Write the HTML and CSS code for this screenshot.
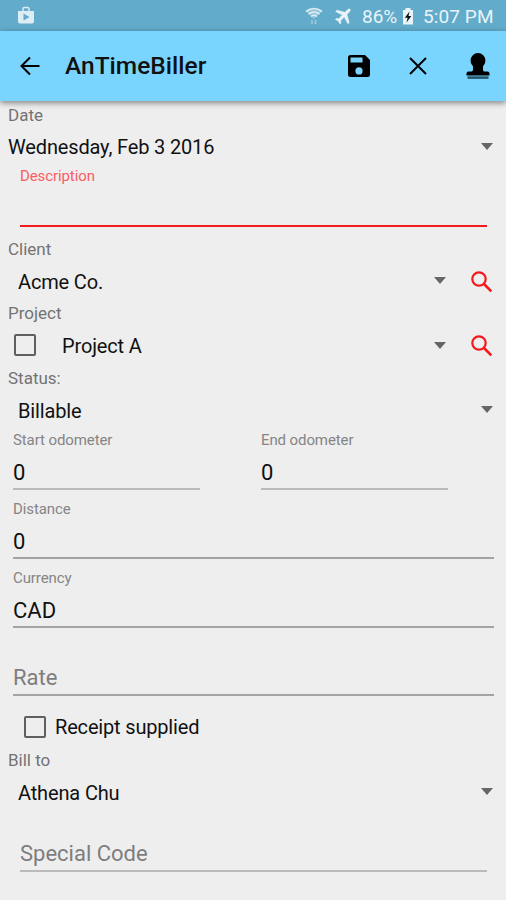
FILE: index.html
```html
<!DOCTYPE html>
<html lang="en">
<head>
<meta charset="utf-8">
<title>AnTimeBiller</title>
<link rel="stylesheet" href="styles.css">
</head>
<body>
<div class="status-bar">
  <svg class="bag" width="18" height="19" viewBox="0 0 18 19"><path d="M6 5V3q0-1.500 1.500-1.500h3Q12 1.500 12 3v2" fill="none" stroke="#dcedf5" stroke-width="1.500"/><path d="M1 5h16v10.500q0 2-2 2H3q-2 0-2-2z" fill="#dcedf5"/><path d="M6.500 7.500v7l6-3.500z" fill="#62abca"/></svg>
  <div class="status-right">
    <svg class="wifi" width="18" height="19" viewBox="0 0 18 19"><g fill="none" stroke="#dcedf5" stroke-width="1.600"><path d="M1 4.500q8-6 16 0M3.500 7q5.500-4 11 0M6 9.500q3-2.500 6 0"/><path d="M7 13v4M10.500 13v4" stroke-opacity=".5"/></g><path d="M1 4.500q8-6 16 0L9 12z" fill="#dcedf5" fill-opacity=".4"/></svg>
    <svg class="plane" width="16" height="17" viewBox="0 0 16 17"><path d="M15 1.200q-1-.8-2.200.3L10 4.300 1.800 2.200.6 3.500l6.700 3.600-3.500 3.600-2.500-.3-1 1 3 1.700 1.700 3 1-1-.3-2.500 3.600-3.500 3.600 6.700 1.300-1.200L12 6.400l2.800-2.900q1.100-1.300.2-2.300z" fill="#e8f4f9" stroke="#e8f4f9" stroke-width=".5"/></svg>
    <span class="percent">86%</span>
    <svg class="battery" width="12" height="17" viewBox="0 0 12 17"><path d="M3.500 0h5v2H11v14.500H1V2h2.500z" fill="#e8f4f9"/><path d="M7.500 3.500 2.800 9.800h2.800l-1 4.700 4.700-6.500H6.500z" fill="#111"/></svg>
    <span class="clock">5:07 PM</span>
  </div>
</div>
<header class="app-bar">
  <svg class="back" width="22" height="20" viewBox="0 0 22 20"><path d="M20.500 10H3M11 1.500 2.500 10l8.500 8.500" fill="none" stroke="#000" stroke-width="2"/></svg>
  <h1 class="title">AnTimeBiller</h1>
  <svg class="save" width="22" height="22" viewBox="0 0 22 22"><path fill="#000" fill-rule="evenodd" d="M2.500 0H17l5 5v14.500q0 2.500-2.500 2.500h-17Q0 22 0 19.500v-17Q0 0 2.500 0zM2.500 2.500v5h12v-5zM11 12.300a3.600 3.600 0 1 0 0 7.200 3.600 3.600 0 0 0 0-7.200z"/></svg>
  <svg class="close" width="18" height="18" viewBox="0 0 18 18"><path d="m1 1 16 16M17 1 1 17" stroke="#000" stroke-width="2"/></svg>
  <svg class="stamp" width="24" height="27" viewBox="0 0 24 27"><path d="M12 0a7.400 7.400 0 0 1 7.400 7.400c0 2.800-1.400 4.600-2.400 5.800v3.300c0 1.500.8 2 2 2h2.500q2 0 2 2v2H.5v-2q0-2 2-2H5c1.200 0 2-.5 2-2v-3.300c-1-1.200-2.400-3-2.400-5.800A7.400 7.400 0 0 1 12 0z" fill="#000"/><path d="M1.500 24.600h21" stroke="#28566b" stroke-width="2.600"/></svg>
</header>
<main class="form">
  <div class="label date-label">Date</div>
  <div class="select date"><span>Wednesday, Feb 3 2016</span><i class="caret"></i></div>
  <div class="field description"><div class="hint">Description</div><div class="value"></div></div>
  <div class="label">Client</div>
  <div class="select searchable"><span class="acme">Acme Co.</span><i class="caret"></i><svg class="search" width="22" height="22" viewBox="0 0 22 22"><g fill="none" stroke="#f5181c"><circle cx="8" cy="8" r="6.700" stroke-width="2.200"/><path d="m13 13 7.300 7.300" stroke-width="2.600"/></g></svg></div>
  <div class="label">Project</div>
  <div class="select searchable project"><i class="checkbox"></i><span>Project A</span><i class="caret"></i><svg class="search" width="22" height="22" viewBox="0 0 22 22"><g fill="none" stroke="#f5181c"><circle cx="8" cy="8" r="6.700" stroke-width="2.200"/><path d="m13 13 7.300 7.300" stroke-width="2.600"/></g></svg></div>
  <div class="label">Status:</div>
  <div class="select"><span>Billable</span><i class="caret"></i></div>
  <div class="odometers">
    <div class="field light"><div class="hint">Start odometer</div><div class="value">0</div></div>
    <div class="field light"><div class="hint">End odometer</div><div class="value">0</div></div>
  </div>
  <div class="field distance"><div class="hint">Distance</div><div class="value">0</div></div>
  <div class="field currency"><div class="hint">Currency</div><div class="value">CAD</div></div>
  <div class="field rate"><div class="value empty">Rate</div></div>
  <div class="receipt"><i class="checkbox"></i><span>Receipt supplied</span></div>
  <div class="label">Bill to</div>
  <div class="select"><span>Athena Chu</span><i class="caret"></i></div>
  <div class="field special light"><div class="value empty">Special Code</div></div>
</main>
</body>
</html>
```
FILE: styles.css
```css
* { box-sizing: border-box; }
body {
  margin: 0;
  height: 900px;
  overflow: hidden;
  background: #eee;
  color: #111;
  font-family: Roboto, sans-serif;
}
svg { display: block; flex: none; }

.status-bar {
  height: 31px;
  padding: 0 12px 0 17px;
  display: flex;
  align-items: center;
  justify-content: space-between;
  background: #62abca;
  color: #e8f4f9;
  font-size: 19px;
}
.status-right { display: flex; align-items: center; line-height: 31px; padding-top: 1px; }
.wifi { margin-right: 1px; }
.plane { margin-left: 11px; }
.percent { margin-left: 11px; width: 36px; white-space: nowrap; }
.battery { margin-left: 4px; }
.clock { margin-left: 9px; width: 71px; white-space: nowrap; letter-spacing: 0.1px; }

.app-bar {
  position: relative;
  height: 70px;
  display: flex;
  align-items: center;
  padding: 0 16px 0 19px;
  background: #79d5fe;
  box-shadow: 0 2px 6px rgba(0, 0, 0, .45);
}
.title {
  margin: 0 auto 0 24px;
  font-size: 24.5px;
  font-weight: 500;
  line-height: 72px;
}
.close { margin-left: 39px; }
.stamp { margin-left: 39px; }

.form { display: flex; flex-direction: column; padding-top: 4px; }
.label {
  height: 21px;
  line-height: 21px;
  padding-left: 8px;
  font-size: 17px;
  color: #737373;
}
.select {
  height: 43px;
  padding: 0 13px 0 18px;
  display: flex;
  align-items: center;
  font-size: 20px;
  letter-spacing: -0.15px;
}
.select.date { padding-left: 8px; height: 42px; }
.caret {
  margin: 0 0 2px auto;
  border: 6px solid transparent;
  border-top: 7px solid #666;
  border-bottom: 0;
}
.search { margin-left: 25px; }
.project { height: 44px; padding-left: 14px; }
.project span { margin-left: 26px; }
.project .checkbox { margin-bottom: 2px; }
.checkbox {
  width: 22px;
  height: 22px;
  border: 2px solid #5f5f5f;
  border-radius: 2px;
  flex: none;
}

.field { margin: 0 12px 0 13px; }
.hint { height: 15px; line-height: 16px; font-size: 15px; letter-spacing: -0.1px; color: #858585; }
.value {
  height: 43px;
  padding-top: 10px;
  line-height: 32px;
  font-size: 22px;
  border-bottom: 2px solid #a3a3a3;
}
.light .value { border-color: #bababa; }
.value.empty { color: #7d7d7d; height: 34px; padding-top: 0; }
.description { margin: 0 19px 12px 20px; }
.description .hint { height: 16px; line-height: 17px; color: #fa5d62; }
.description .value { border-color: #f11c20; }
.odometers { display: grid; grid-template-columns: 187px 187px; column-gap: 61px; padding-left: 13px; }
.odometers .field { margin: 0; }
.distance { margin-top: 11px; }
.currency { margin-top: 11px; }
.rate { margin-top: 34px; }
.receipt {
  height: 30px;
  margin: 16px 0 8px;
  padding-left: 24px;
  display: flex;
  align-items: center;
  gap: 9px;
  font-size: 20px;
  letter-spacing: -0.17px;
}
.special { margin: 24px 19px 0 20px; }
```
